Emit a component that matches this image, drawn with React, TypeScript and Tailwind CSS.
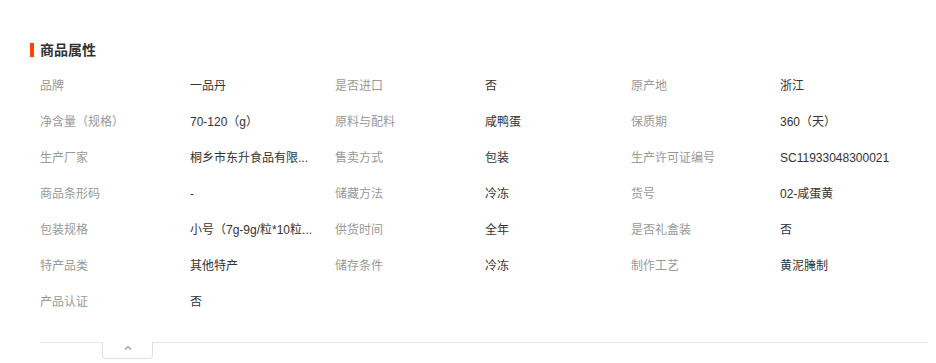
import React from "react"

// Product attribute rows, three label/value pairs per row
const rows: [string, string][][] = [
  [
    ["品牌", "一品丹"],
    ["是否进口", "否"],
    ["原产地", "浙江"],
  ],
  [
    ["净含量（规格）", "70-120（g）"],
    ["原料与配料", "咸鸭蛋"],
    ["保质期", "360（天）"],
  ],
  [
    ["生产厂家", "桐乡市东升食品有限..."],
    ["售卖方式", "包装"],
    ["生产许可证编号", "SC11933048300021"],
  ],
  [
    ["商品条形码", "-"],
    ["储藏方法", "冷冻"],
    ["货号", "02-咸蛋黄"],
  ],
  [
    ["包装规格", "小号（7g-9g/粒*10粒..."],
    ["供货时间", "全年"],
    ["是否礼盒装", "否"],
  ],
  [
    ["特产品类", "其他特产"],
    ["储存条件", "冷冻"],
    ["制作工艺", "黄泥腌制"],
  ],
  [["产品认证", "否"]],
]

const colWidths = ["w-[150px]", "w-[145px]", "w-[150px]", "w-[146px]", "w-[149px]", "w-[145px]"]

export default function App() {
  return (
    <div className="w-[936px] h-[363px] bg-white font-['Liberation_Sans','Noto_Sans_CJK_SC',sans-serif] overflow-hidden">
      <div className="pt-[40px] pl-[30px]">
        {/* Title */}
        <div className="flex items-center h-5">
          <span className="w-[4px] h-[14px] bg-[#ff4400]" />
          <h2 className="ml-[6px] text-[14px] font-bold text-[#333]">商品属性</h2>
        </div>

        {/* Attributes */}
        <div className="mt-[8px] pl-[10px]">
          {rows.map((row, i) => (
            <div key={i} className="flex h-9 items-center text-[12px]">
              {row.map(([label, value], j) => (
                <React.Fragment key={j}>
                  <div className={`${colWidths[j * 2]} text-[#999] shrink-0`}>{label}</div>
                  <div className={`${colWidths[j * 2 + 1]} shrink-0 pr-5 text-[#333] truncate`}>{value}</div>
                </React.Fragment>
              ))}
            </div>
          ))}
        </div>
      </div>

      {/* Collapse bar */}
      <div className="mt-[22px] ml-[40px] mr-[8px] flex">
        <div className="w-[62px] border-t border-[#e5e5e5]" />
        <button className="w-[51px] h-[17px] border border-t-0 border-[#e0e0e0] rounded-b-[4px] flex items-start justify-center pt-[3px]">
          <svg width="8" height="5" viewBox="0 0 8 5" fill="none">
            <path d="M1 4.5 L4 1.5 L7 4.5" stroke="#999" strokeWidth="1.2" />
          </svg>
        </button>
        <div className="flex-1 border-t border-[#e5e5e5]" />
      </div>
    </div>
  )
}
